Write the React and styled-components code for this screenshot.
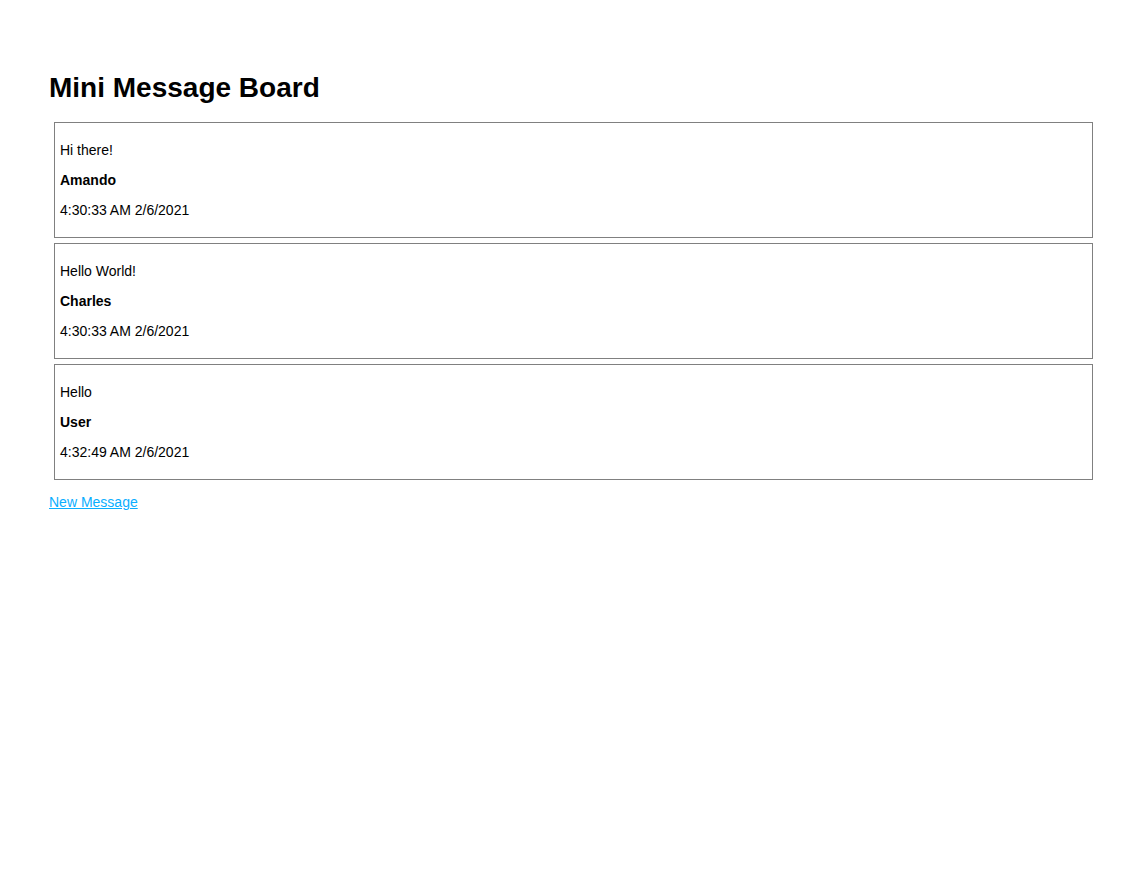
import React from "react";
import styled, { createGlobalStyle } from "styled-components";

const GlobalStyle = createGlobalStyle`
  html, body {
    margin: 0;
    padding: 0;
    background: #ffffff;
  }
  body {
    font-family: "Liberation Sans", Arial, sans-serif;
    font-size: 14px;
    color: #000000;
  }
`;

const Page = styled.main`
  padding: 72px 36px 0 49px;
`;

const Title = styled.h1`
  font-size: 28px;
  font-weight: bold;
  line-height: 32px;
  margin: 0 0 18px 0;
`;

const List = styled.div`
  display: flex;
  flex-direction: column;
  gap: 5px;
`;

const Card = styled.div`
  margin: 0 5px;
  border: 1px solid #808080;
  padding: 5px;
`;

const Line = styled.p`
  margin: 14px 0;
  line-height: 16px;
  font-weight: ${(p) => (p.$bold ? "bold" : "normal")};
`;

const Footer = styled.p`
  margin: 14px 0;
  line-height: 16px;
`;

const Link = styled.a`
  color: #0aaeff;
  text-decoration: underline;
`;

const messages = [
  { text: "Hi there!", user: "Amando", added: "4:30:33 AM 2/6/2021" },
  { text: "Hello World!", user: "Charles", added: "4:30:33 AM 2/6/2021" },
  { text: "Hello", user: "User", added: "4:32:49 AM 2/6/2021" },
];

export default function App() {
  return (
    <>
      <GlobalStyle />
      <Page>
        <Title>Mini Message Board</Title>
        <List>
          {messages.map((m, i) => (
            <Card key={i}>
              <Line>{m.text}</Line>
              <Line $bold>{m.user}</Line>
              <Line>{m.added}</Line>
            </Card>
          ))}
        </List>
        <Footer>
          <Link href="#new">New Message</Link>
        </Footer>
      </Page>
    </>
  );
}
